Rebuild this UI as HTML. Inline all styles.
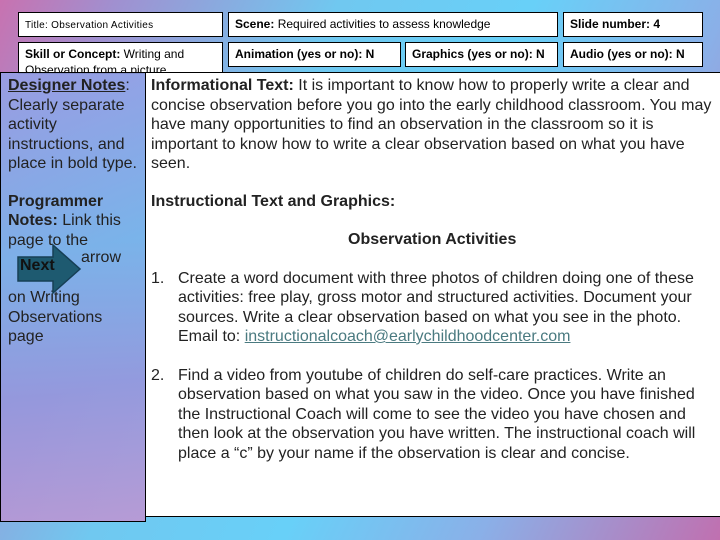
<!DOCTYPE html>
<html><head><meta charset="utf-8"><style>
*{margin:0;padding:0;box-sizing:border-box}
body{width:720px;height:540px;overflow:hidden;position:relative;font-family:"Liberation Sans",Arial,sans-serif;
background:linear-gradient(115deg,#c872b0 0%,#a090d0 12%,#70c8f0 35%,#68d0f8 55%,#8ab0e8 75%,#c070b0 100%);}
.b{position:absolute;background:#fff;border:1px solid #000;font-size:12px;padding:4px 6px;line-height:15px;color:#000;white-space:nowrap;overflow:hidden}
.left{position:absolute;left:0;top:72px;width:146px;height:450px;border:1px solid #000;
background:linear-gradient(170deg,rgba(150,160,230,.9) 0%,rgba(120,180,235,.85) 40%,rgba(150,150,220,.9) 70%,rgba(190,150,210,.9) 100%);font-size:16px;line-height:19.5px;padding:3px 0 0 7px;color:#222;white-space:nowrap}
.right{position:absolute;left:146px;top:72px;width:574px;height:445px;background:#fff;border-top:1px solid #000;border-bottom:1px solid #000;font-size:16px;line-height:19.5px;color:#222;padding:3px 0 0 5px;white-space:nowrap}
.li{position:relative;padding-left:27px}
.li span.n{position:absolute;left:0;top:0}
a{color:#4a7a80;text-decoration:underline}
</style></head><body>
<div class="b" style="left:18px;top:12px;width:205px;height:25px;font-size:10px;padding-top:5px;letter-spacing:.3px">Title: Observation Activities</div>
<div class="b" style="left:228px;top:12px;width:330px;height:25px"><b>Scene:</b> Required activities to assess knowledge</div>
<div class="b" style="left:563px;top:12px;width:140px;height:25px"><b>Slide number: 4</b></div>
<div class="b" style="left:18px;top:42px;width:205px;height:32px;white-space:normal;line-height:16px;padding-top:3px"><b>Skill or Concept:</b> Writing and Observation from a picture</div>
<div class="b" style="left:228px;top:42px;width:173px;height:25px"><b>Animation (yes or no): N</b></div>
<div class="b" style="left:405px;top:42px;width:153px;height:25px"><b>Graphics (yes or no): N</b></div>
<div class="b" style="left:563px;top:42px;width:140px;height:25px"><b>Audio (yes or no): N</b></div>
<div class="left">
<div><b style="text-decoration:underline">Designer Notes</b>:<br>Clearly separate<br>activity<br>instructions, and<br>place in bold type.</div>
<div style="margin-top:18px"><b>Programmer<br>Notes:</b> Link this<br>page to the</div>
<div style="position:relative;height:38px">
<svg style="position:absolute;left:9px;top:-7px" width="66" height="52" viewBox="0 0 66 52"><path d="M1 14H36V2L63 26L36 50V38H1Z" fill="#1e5a70" stroke="#163f55" stroke-width="1.5"/></svg>
<b style="position:absolute;left:12px;top:6px;color:#111">Next</b>
<span style="position:absolute;left:73px;top:-2px">arrow</span>
</div>
<div>on Writing<br>Observations<br>page</div>
</div>
<div class="right">
<p><b>Informational Text:</b> It is important to know how to properly write a clear and<br>concise observation before you go into the early childhood classroom. You may<br>have many opportunities to find an observation in the classroom so it is<br>important to know how to write a clear observation based on what you have<br>seen.</p>
<p style="margin-top:18px"><b>Instructional Text and Graphics:</b></p>
<p style="margin-top:19px;margin-left:197px;font-weight:bold">Observation Activities</p>
<div class="li" style="margin-top:19px"><span class="n">1.</span>Create a word document with three photos of children doing one of these<br>activities: free play, gross motor and structured activities. Document your<br>sources. Write a clear observation based on what you see in the photo.<br>Email to: <a>instructionalcoach@earlychildhoodcenter.com</a></div>
<div class="li" style="margin-top:19px"><span class="n">2.</span>Find a video from youtube of children do self-care practices. Write an<br>observation based on what you saw in the video. Once you have finished<br>the Instructional Coach will come to see the video you have chosen and<br>then look at the observation you have written. The instructional coach will<br>place a “c” by your name if the observation is clear and concise.</div>
</div>
</body></html>
